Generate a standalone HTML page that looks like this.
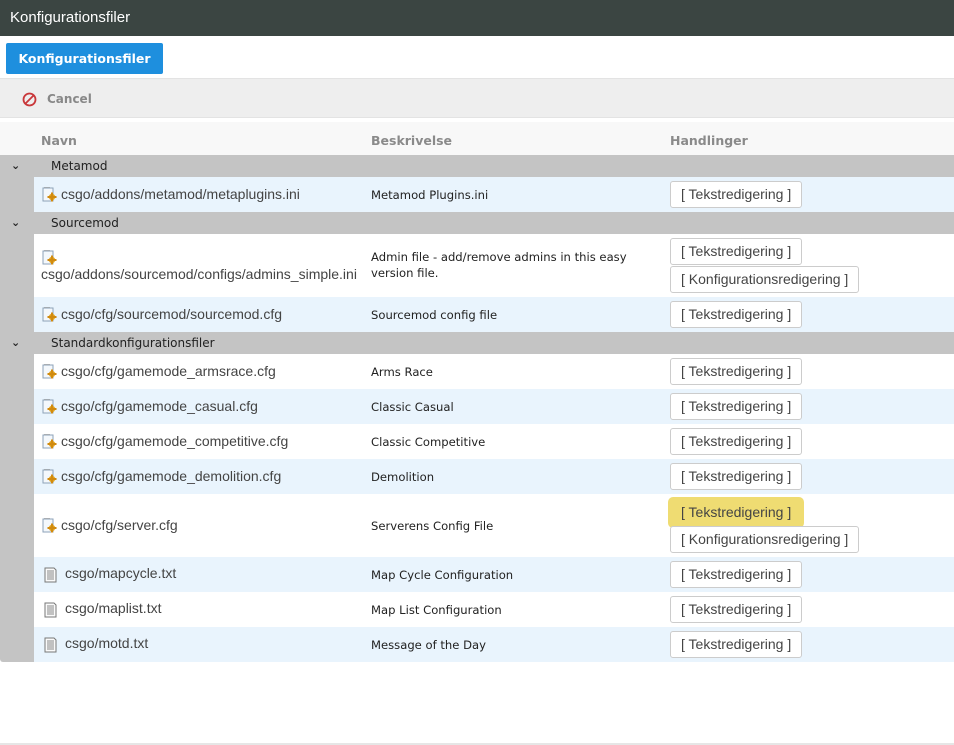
<!DOCTYPE html>
<html><head><meta charset="utf-8"><style>
*{margin:0;padding:0;box-sizing:border-box}
body{width:954px;height:745px;background:#fff;position:relative;overflow:hidden;font-family:"Liberation Sans",Arial,sans-serif}
.a{position:absolute}
.title{left:0;top:0;width:954px;height:36px;background:#3b4542;color:#fff;font-size:15px;line-height:36px;padding-left:10px}
.tab{left:6px;top:43px;width:157px;height:31px;background:#1e8fde;border-radius:2px;color:#fff;font-family:"DejaVu Sans",sans-serif;font-weight:bold;font-size:12.5px;line-height:31px;text-align:center}
.tool{left:0;top:78px;width:954px;height:40px;background:#eee;border-top:1px solid #e3e3e3;border-bottom:1px solid #e3e3e3}
.cancel{left:47px;top:92px;color:#888;font-family:"DejaVu Sans",sans-serif;font-weight:bold;font-size:12px}
.hdr{left:0;top:122px;width:954px;height:33px;background:#f8f8f8}
.h{top:133px;color:#8a8a8a;font-family:"DejaVu Sans",sans-serif;font-weight:bold;font-size:12.5px}
.gut{left:0;top:155px;width:34px;height:507px;background:#c4c4c4;border-bottom-left-radius:3px}
.grp{left:0;width:954px;height:22px;background:#c4c4c4;font-family:"DejaVu Sans",sans-serif;font-size:12px;color:#222;line-height:22px}
.grp span{position:absolute;left:51px}
.grp i{position:absolute;left:11px;top:0;font-style:normal;font-size:11px;font-weight:bold}
.row{left:34px;width:920px}
.b{background:#e9f4fd}
.nm{position:absolute;left:27px;font-size:14px;color:#444}
.ds{position:absolute;left:337px;font-family:"DejaVu Sans",sans-serif;font-size:11.6px;color:#222;line-height:16px}
.btn{position:absolute;left:636px;height:27px;border:1px solid #ccc;border-radius:3px;background:#fff;font-size:14px;color:#444;line-height:25px;padding:0 10px;white-space:nowrap}
.btn.w{width:132px}
.btn.y{background:#efdc72;border-color:#efdc72;box-shadow:0 0 0 2px #efdc72}
.ic{position:absolute;left:8px;width:15px;height:16px}
</style></head><body>
<div class="a title">Konfigurationsfiler</div>
<div class="a tab">Konfigurationsfiler</div>
<div class="a tool"></div>
<svg class="a" style="left:22px;top:92px" width="15" height="15" viewBox="0 0 15 15"><circle cx="7.5" cy="7.5" r="6" fill="none" stroke="#c9373a" stroke-width="1.8"/><line x1="3.5" y1="11.5" x2="11.5" y2="3.5" stroke="#c9373a" stroke-width="1.8"/></svg>
<div class="a cancel">Cancel</div>
<div class="a hdr"></div>
<div class="a h" style="left:41px">Navn</div>
<div class="a h" style="left:371px">Beskrivelse</div>
<div class="a h" style="left:670px">Handlinger</div>
<div class="a gut"></div>

<svg width="0" height="0" style="position:absolute"><defs>
<symbol id="cfg" viewBox="0 0 15 16"><rect x="1" y="1" width="10" height="13" fill="#f4f8fc" stroke="#8da2b8"/><line x1="3" y1="1" x2="3" y2="0" stroke="#888"/><line x1="5" y1="1" x2="5" y2="0" stroke="#888"/><line x1="7" y1="1" x2="7" y2="0" stroke="#888"/><circle cx="10" cy="10" r="3.2" fill="#e2a21a"/><rect x="9" y="5.5" width="2" height="9" fill="#d08a10"/><rect x="5.5" y="9" width="9" height="2" fill="#d08a10"/></symbol>
<symbol id="txt" viewBox="0 0 15 16"><path d="M2 1H11L13 3V15H2Z" fill="#fafafa" stroke="#777"/><g stroke="#888"><line x1="4" y1="4" x2="11" y2="4"/><line x1="4" y1="6" x2="11" y2="6"/><line x1="4" y1="8" x2="11" y2="8"/><line x1="4" y1="10" x2="11" y2="10"/><line x1="4" y1="12" x2="11" y2="12"/></g></symbol>
</defs></svg>

<div class="a grp" style="top:155px"><i>⌄</i><span>Metamod</span></div>
<div class="a row b" style="top:177px;height:35px"><svg class="ic" style="top:10px"><use href="#cfg"/></svg><div class="nm" style="top:9px">csgo/addons/metamod/metaplugins.ini</div><div class="ds" style="top:10px">Metamod Plugins.ini</div><div class="btn w" style="top:4px">[ Tekstredigering ]</div></div>

<div class="a grp" style="top:212px"><i>⌄</i><span>Sourcemod</span></div>
<div class="a row" style="top:234px;height:63px"><svg class="ic" style="top:16px"><use href="#cfg"/></svg><div class="nm" style="left:7px;top:32px">csgo/addons/sourcemod/configs/admins_simple.ini</div><div class="ds" style="top:15px">Admin file - add/remove admins in this easy<br>version file.</div><div class="btn w" style="top:4px">[ Tekstredigering ]</div><div class="btn" style="top:32px">[ Konfigurationsredigering ]</div></div>
<div class="a row b" style="top:297px;height:35px"><svg class="ic" style="top:10px"><use href="#cfg"/></svg><div class="nm" style="top:9px">csgo/cfg/sourcemod/sourcemod.cfg</div><div class="ds" style="top:10px">Sourcemod config file</div><div class="btn w" style="top:4px">[ Tekstredigering ]</div></div>

<div class="a grp" style="top:332px"><i>⌄</i><span>Standardkonfigurationsfiler</span></div>
<div class="a row" style="top:354px;height:35px"><svg class="ic" style="top:10px"><use href="#cfg"/></svg><div class="nm" style="top:9px">csgo/cfg/gamemode_armsrace.cfg</div><div class="ds" style="top:10px">Arms Race</div><div class="btn w" style="top:4px">[ Tekstredigering ]</div></div>
<div class="a row b" style="top:389px;height:35px"><svg class="ic" style="top:10px"><use href="#cfg"/></svg><div class="nm" style="top:9px">csgo/cfg/gamemode_casual.cfg</div><div class="ds" style="top:10px">Classic Casual</div><div class="btn w" style="top:4px">[ Tekstredigering ]</div></div>
<div class="a row" style="top:424px;height:35px"><svg class="ic" style="top:10px"><use href="#cfg"/></svg><div class="nm" style="top:9px">csgo/cfg/gamemode_competitive.cfg</div><div class="ds" style="top:10px">Classic Competitive</div><div class="btn w" style="top:4px">[ Tekstredigering ]</div></div>
<div class="a row b" style="top:459px;height:35px"><svg class="ic" style="top:10px"><use href="#cfg"/></svg><div class="nm" style="top:9px">csgo/cfg/gamemode_demolition.cfg</div><div class="ds" style="top:10px">Demolition</div><div class="btn w" style="top:4px">[ Tekstredigering ]</div></div>
<div class="a row" style="top:494px;height:63px"><svg class="ic" style="top:24px"><use href="#cfg"/></svg><div class="nm" style="top:23px">csgo/cfg/server.cfg</div><div class="ds" style="top:24px">Serverens Config File</div><div class="btn w y" style="top:5px">[ Tekstredigering ]</div><div class="btn" style="top:32px">[ Konfigurationsredigering ]</div></div>
<div class="a row b" style="top:557px;height:35px"><svg class="ic" style="top:10px;left:9px"><use href="#txt"/></svg><div class="nm" style="left:31px;top:8px">csgo/mapcycle.txt</div><div class="ds" style="top:10px">Map Cycle Configuration</div><div class="btn w" style="top:4px">[ Tekstredigering ]</div></div>
<div class="a row" style="top:592px;height:35px"><svg class="ic" style="top:10px;left:9px"><use href="#txt"/></svg><div class="nm" style="left:31px;top:8px">csgo/maplist.txt</div><div class="ds" style="top:10px">Map List Configuration</div><div class="btn w" style="top:4px">[ Tekstredigering ]</div></div>
<div class="a row b" style="top:627px;height:35px"><svg class="ic" style="top:10px;left:9px"><use href="#txt"/></svg><div class="nm" style="left:31px;top:8px">csgo/motd.txt</div><div class="ds" style="top:10px">Message of the Day</div><div class="btn w" style="top:4px">[ Tekstredigering ]</div></div>
<div class="a" style="left:0;top:743px;width:954px;height:2px;background:#e6e6e6"></div>
</body></html>
